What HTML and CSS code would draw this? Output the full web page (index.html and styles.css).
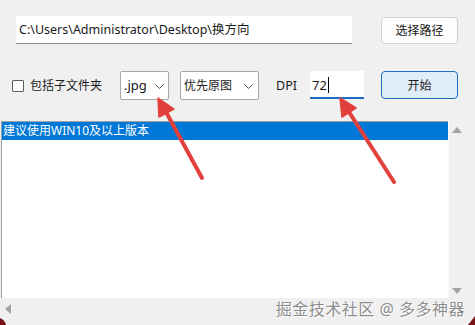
FILE: index.html
```html
<!DOCTYPE html>
<html lang="zh-CN">
<head>
  <meta charset="UTF-8">
  <meta name="viewport" content="width=device-width, initial-scale=1.0">
  <title>换方向</title>
  <link rel="stylesheet" href="styles.css">
</head>
<body>
  <div class="window">
    <div class="row-path">
      <div class="path-box">C:\Users\Administrator\Desktop\换方向</div>
      <button class="btn">选择路径</button>
    </div>

    <div class="row-opts">
      <label class="check"><span class="check-box"></span>包括子文件夹</label>
      <div class="select sel-ext">
        <span>.jpg</span>
        <svg class="chev" width="9" height="5" viewBox="0 0 9 5"><path d="M0.5 0.5 L4.5 4.5 L8.5 0.5" fill="none" stroke="#555" stroke-width="1"/></svg>
      </div>
      <div class="select sel-mode">
        <span>优先原图</span>
        <svg class="chev" width="9" height="5" viewBox="0 0 9 5"><path d="M0.5 0.5 L4.5 4.5 L8.5 0.5" fill="none" stroke="#555" stroke-width="1"/></svg>
      </div>
      <span class="dpi-label">DPI</span>
      <div class="dpi-box"><span>72</span><span class="caret"></span></div>
      <button class="btn btn-primary">开始</button>
    </div>

    <div class="listbox">
      <div class="list-items">
        <div class="list-item selected">建议使用WIN10及以上版本</div>
      </div>
      <div class="vscroll">
        <svg width="10" height="6" viewBox="0 0 10 6"><path d="M5 0 L10 6 L0 6 Z" fill="#a3a3a3"/></svg>
        <svg width="10" height="6" viewBox="0 0 10 6"><path d="M0 0 L10 0 L5 6 Z" fill="#a3a3a3"/></svg>
      </div>
      <div class="hscroll">
        <svg width="6" height="10" viewBox="0 0 6 10"><path d="M6 0 L6 10 L0 5 Z" fill="#a3a3a3"/></svg>
      </div>
      <div class="corner"></div>
    </div>

    <div class="watermark">掘金技术社区 @ 多多神器</div>

    <svg class="arrows" width="475" height="325" viewBox="0 0 475 325">
      <g stroke="#e2403d" stroke-width="4" stroke-linecap="round" fill="#e2403d">
        <line x1="166" y1="112" x2="202" y2="178"/>
        <path d="M158 98 L174 109 L159 117 Z" stroke-width="1.5" stroke-linejoin="round"/>
        <line x1="349" y1="112" x2="394" y2="182"/>
        <path d="M340 98 L356 108 L342 117 Z" stroke-width="1.5" stroke-linejoin="round"/>
      </g>
      <path d="M0 318 Q5 320 6 325 L0 325 Z" fill="#7a1414"/>
      <path d="M475 316 L475 325 L468 325 Z" fill="#7a1414"/>
    </svg>
  </div>
</body>
</html>
```

FILE: styles.css
```css
body {
  margin: 0;
  background: #f0f0f0;
  font-family: "Noto Sans", "Noto Sans CJK SC", sans-serif;
  font-size: 12px;
  color: #1a1a1a;
  overflow: hidden;
}
.window {
  position: relative;
  width: 475px;
  height: 325px;
  display: flex;
  flex-direction: column;
}
.row-path {
  display: flex;
  align-items: center;
  padding: 16px 17px 0 16px;
  height: 28px;
}
.path-box {
  box-sizing: border-box;
  width: 336px;
  height: 28px;
  background: #fff;
  border-bottom: 1px solid #8c8c8c;
  padding: 0 3px;
  line-height: 27px;
  font-size: 12.5px;
  white-space: nowrap;
}
.btn {
  margin-left: auto;
  box-sizing: border-box;
  width: 77px;
  height: 27px;
  background: #fdfdfd;
  border: 1px solid #d0d0d0;
  border-radius: 4px;
  font-family: inherit;
  font-size: 12px;
  color: #1a1a1a;
  padding: 0;
}
.btn-primary {
  background: #e0ecf8;
  border-color: #1a6fc4;
  height: 28px;
}
.row-opts {
  display: flex;
  align-items: center;
  padding: 27px 17px 0 12px;
  height: 28px;
}
.check {
  display: flex;
  align-items: center;
  gap: 6px;
  width: 108px;
}
.check-box {
  box-sizing: border-box;
  width: 12px;
  height: 12px;
  background: #fff;
  border: 1px solid #5a5a5a;
  border-radius: 1px;
  margin-top: 2px;
}
.select {
  box-sizing: border-box;
  height: 29px;
  background: #fff;
  border: 1px solid #a8a8a8;
  border-radius: 2px;
  display: flex;
  align-items: center;
  justify-content: space-between;
  padding: 0 4px 0 3px;
  font-size: 12px;
}
.sel-ext {
  width: 49px;
  font-size: 13px;
}
.sel-mode {
  width: 79px;
  margin-left: 11px;
  padding-right: 5px;
}
.chev {
  margin-top: 2px;
}
.dpi-label {
  margin-left: 17px;
  width: 34px;
  font-size: 12.5px;
}
.dpi-box {
  box-sizing: border-box;
  width: 54px;
  height: 28px;
  background: #fff;
  border-bottom: 2px solid #1a6fc4;
  display: flex;
  align-items: center;
  padding: 2px 2px 0;
  font-size: 13px;
}
.caret {
  width: 1px;
  height: 16px;
  background: #000;
  margin-left: 1px;
}
.listbox {
  margin: 22px 0 0 1px;
  flex: 1;
  display: grid;
  grid-template-columns: 1fr 27px;
  grid-template-rows: 1fr 27px;
}
.list-items {
  background: #fff;
  border-top: 1px solid #a0a0a0;
  border-left: 1px solid #a0a0a0;
}
.list-item {
  height: 18px;
  line-height: 18px;
  padding-left: 1px;
  white-space: nowrap;
}
.list-item.selected {
  background: #0078d7;
  color: #fff;
}
.vscroll {
  background: #f0f0f0;
  border-left: 1px solid #fafafa;
  display: flex;
  flex-direction: column;
  justify-content: space-between;
  align-items: center;
  padding: 6px 0 4px;
  margin-right: 0;
}
.vscroll svg {
  margin-right: 10px;
}
.hscroll {
  background: #f0f0f0;
  display: flex;
  align-items: center;
  padding-left: 4px;
  padding-bottom: 6px;
}
.corner {
  background: #f0f0f0;
}
.watermark {
  position: absolute;
  right: 10px;
  top: 296px;
  font-size: 16px;
  letter-spacing: 0.5px;
  color: #8d8d8d;
  text-shadow: 0 0 1px #fff, 1px 1px 0 #fff;
  white-space: nowrap;
}
.arrows {
  position: absolute;
  left: 0;
  top: 0;
  pointer-events: none;
}
```
